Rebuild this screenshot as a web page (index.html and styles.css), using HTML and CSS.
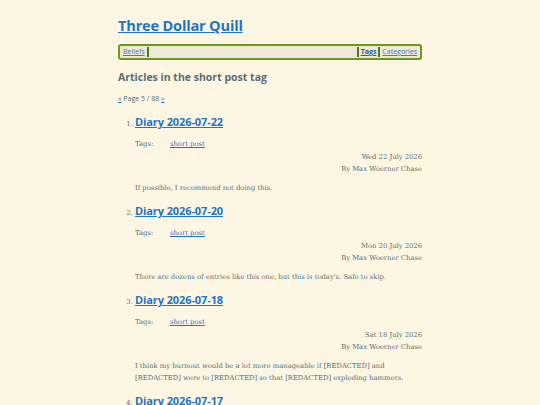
FILE: index.html
```html
<!DOCTYPE html>
<html>
<head>
<meta charset="utf-8">
<link rel="stylesheet" href="styles.css">
</head>
<body>
<div class="page">
  <header class="site-header">
    <a class="site-title" href="#">Three Dollar Quill</a>
    <nav class="nav">
      <a href="#">Beliefs</a><span class="sep"></span>
      <span class="spacer"></span>
      <span class="sep"></span><a class="current" href="#">Tags</a><span class="sep"></span><a href="#">Categories</a>
    </nav>
  </header>
  <h1 class="page-heading">Articles in the short post tag</h1>
  <p class="pager"><a href="#">«</a> Page 5 / 88 <a href="#">»</a></p>
  <ol class="articles">
    <li>
      <h2 class="entry-title"><a href="#">Diary 2026-07-22</a></h2>
      <div class="tags"><span class="label">Tags:</span><a href="#">short post</a></div>
      <div class="meta"><div>Wed 22 July 2026</div><div>By Max Woerner Chase</div></div>
      <p class="summary">If possible, I recommend not doing this.</p>
    </li>
    <li>
      <h2 class="entry-title"><a href="#">Diary 2026-07-20</a></h2>
      <div class="tags"><span class="label">Tags:</span><a href="#">short post</a></div>
      <div class="meta"><div>Mon 20 July 2026</div><div>By Max Woerner Chase</div></div>
      <p class="summary">There are dozens of entries like this one, but this is today's. Safe to skip.</p>
    </li>
    <li>
      <h2 class="entry-title"><a href="#">Diary 2026-07-18</a></h2>
      <div class="tags"><span class="label">Tags:</span><a href="#">short post</a></div>
      <div class="meta"><div>Sat 18 July 2026</div><div>By Max Woerner Chase</div></div>
      <p class="summary">I think my burnout would be a lot more manageable if [REDACTED] and [REDACTED] were to [REDACTED] so that [REDACTED] exploding hammers.</p>
    </li>
    <li>
      <h2 class="entry-title"><a href="#">Diary 2026-07-17</a></h2>
      <div class="tags"><span class="label">Tags:</span><a href="#">short post</a></div>
      <div class="meta"><div>Fri 17 July 2026</div><div>By Max Woerner Chase</div></div>
      <p class="summary">Another one.</p>
    </li>
  </ol>
</div>
</body>
</html>
```
FILE: styles.css
```css
html, body {
  margin: 0;
  padding: 0;
  background: #fdf6e3;
}
body {
  color: #586e75;
  font-family: "DejaVu Serif", serif;
  font-size: 6.8px;
  line-height: 12px;
}
a { color: #1f75c4; }
.page {
  width: 304px;
  margin: 0 auto;
  padding-top: 14px;
}
.site-title {
  display: inline-block;
  font-family: "Open Sans", sans-serif;
  font-weight: 700;
  font-size: 14.6px;
  line-height: 22px;
  color: #1f75c4;
  letter-spacing: -0.2px;
}
.nav {
  margin-top: 8px;
  display: flex;
  align-items: stretch;
  height: 12px;
  border: 2px solid #6c9a1e;
  border-radius: 3px;
  background: #eee8d5;
  padding: 0 2px;
  font-family: "Open Sans", sans-serif;
  font-size: 7px;
  line-height: 12px;
}
.nav a { color: #3d7fc0; padding: 0 1px; }
.nav a.current { font-weight: 700; color: #2563a8; }
.nav .sep {
  width: 2px;
  background: #4f7a12;
  margin: 1px 1px;
}
.nav .spacer { flex: 1; }
.page-heading {
  font-family: "Open Sans", sans-serif;
  font-size: 10.5px;
  font-weight: 700;
  color: #586e75;
  margin: 9px 0 0;
  line-height: 16px;
}
.pager {
  font-family: "Open Sans", sans-serif;
  font-size: 7px;
  margin: 8px 0 0;
  line-height: 12px;
}
.articles {
  margin: 8px 0 0;
  padding-left: 17px;
}
.articles li {
  margin-bottom: 8px;
}
.entry-title {
  font-family: "Open Sans", sans-serif;
  font-size: 11px;
  font-weight: 700;
  margin: 0;
  line-height: 18px;
  letter-spacing: -0.1px;
}
.entry-title a { color: #1f75c4; }
.tags {
  margin-top: 7px;
  display: flex;
}
.tags .label { width: 35px; }
.meta {
  text-align: right;
  margin-top: 1px;
}
.summary {
  margin: 7px 0 0;
}
```
